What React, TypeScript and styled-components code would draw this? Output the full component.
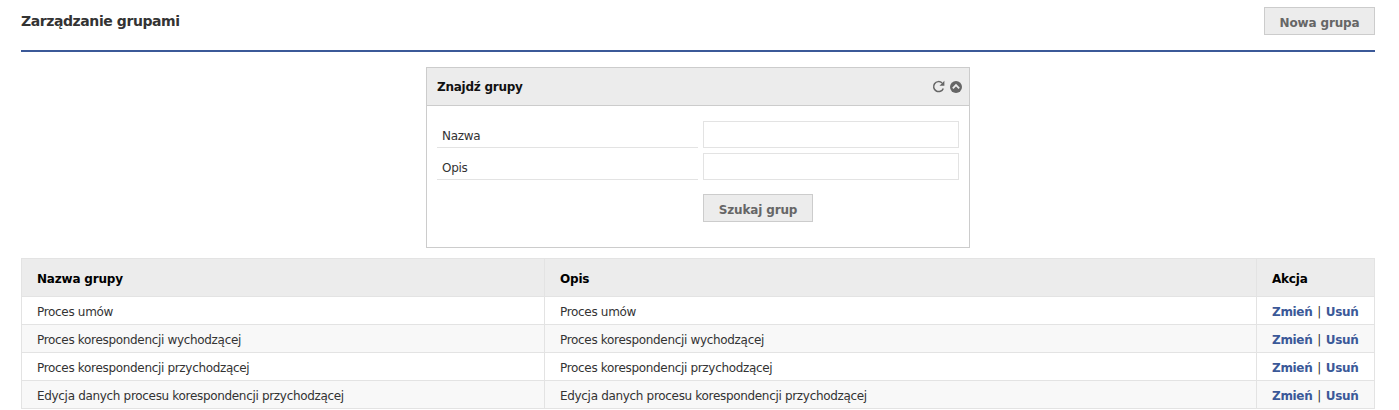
import React from "react";
import styled, { createGlobalStyle } from "styled-components";

const GlobalStyle = createGlobalStyle`
    html, body {
        margin: 0;
        padding: 0;
        background: #ffffff;
        overflow: hidden;
    }
    body {
        font-family: "DejaVu Sans", Verdana, sans-serif;
        font-size: 12px;
        letter-spacing: -0.32px;
        color: #333333;
    }
`;

const Page = styled.div`
    padding: 7px 24px 0 21px;
`;

const TopBar = styled.div`
    display: flex;
    justify-content: space-between;
    align-items: flex-start;
    height: 43px;
    border-bottom: 2px solid #3b5998;
`;

const PageTitle = styled.h1`
    margin: 6px 0 0;
    font-size: 14px;
    line-height: 17px;
    font-weight: bold;
    color: #333333;
    letter-spacing: -0.42px;
`;

const Button = styled.button`
    height: 28px;
    padding: 3px 0 0;
    width: ${(p) => p.$width}px;
    background: #ececec;
    border: 1px solid #cccccc;
    color: #666666;
    font-family: inherit;
    font-size: 12px;
    font-weight: bold;
    letter-spacing: -0.15px;
`;

const Panel = styled.section`
    width: 542px;
    height: 179px;
    margin: 15px auto 0;
    border: 1px solid #cccccc;
`;

const PanelHead = styled.header`
    display: flex;
    justify-content: space-between;
    align-items: center;
    height: 37px;
    padding: 0 7px 0 10px;
    background: #ececec;
    border-bottom: 1px solid #cccccc;
`;

const PanelTitle = styled.h2`
    margin: 1px 0 0;
    font-size: 12px;
    font-weight: bold;
    color: #111111;
    letter-spacing: -0.25px;
`;

const PanelIcons = styled.div`
    display: flex;
    align-items: center;
    gap: 5px;
`;

const PanelBody = styled.div`
    padding: 15px 10px 0;
`;

const FieldRow = styled.div`
    display: flex;
    gap: 5px;
    margin-bottom: 5px;
`;

const FieldLabel = styled.label`
    display: flex;
    align-items: center;
    box-sizing: border-box;
    width: 261px;
    height: 27px;
    padding: 4px 0 0 5px;
    border-bottom: 1px solid #e3e3e3;
`;

const FieldInput = styled.input`
    box-sizing: border-box;
    width: 256px;
    height: 27px;
    border: 1px solid #e3e3e3;
    background: #ffffff;
    outline: none;
`;

const FormActions = styled.div`
    margin: 14px 0 0 266px;
`;

const Table = styled.table`
    width: 1354px;
    margin-top: 10px;
    border-collapse: collapse;
    table-layout: fixed;
`;

const Th = styled.th`
    height: 35px;
    padding: 2px 15px 0;
    background: #ececec;
    border: 1px solid #e3e3e3;
    text-align: left;
    font-size: 12px;
    font-weight: bold;
    letter-spacing: -0.2px;
    color: #000000;
    width: ${(p) => (p.$width ? `${p.$width}px` : "auto")};
`;

const Row = styled.tr`
    background: ${(p) => (p.$alt ? "#f8f8f8" : "#ffffff")};
`;

const Td = styled.td`
    height: 25px;
    padding: 2px 15px 0;
    border: 1px solid #e3e3e3;
    white-space: nowrap;
`;

const ActionLink = styled.a`
    color: #3b5998;
    font-weight: bold;
    text-decoration: none;
`;

const Separator = styled.span`
    margin: 0 1.3px;
`;

const groups = [
    "Proces umów",
    "Proces korespondencji wychodzącej",
    "Proces korespondencji przychodzącej",
    "Edycja danych procesu korespondencji przychodzącej",
];

const App: React.FC = () => {
    return (
        <Page>
            <GlobalStyle />
            <TopBar>
                <PageTitle>Zarządzanie grupami</PageTitle>
                <Button $width={111}>Nowa grupa</Button>
            </TopBar>

            <Panel>
                <PanelHead>
                    <PanelTitle>Znajdź grupy</PanelTitle>
                    <PanelIcons>
                        <svg width="13" height="13" viewBox="0 0 13 13" fill="none">
                            <path d="M11.3 8.4A5 5 0 1 1 10 2.9" stroke="#666666" strokeWidth="1.5" />
                            <path d="M12.4 .8v4.9H7.5z" fill="#666666" />
                        </svg>
                        <svg width="12" height="12" viewBox="0 0 12 12">
                            <circle cx="6" cy="6" r="6" fill="#666666" />
                            <path d="M2.8 7.3 6 4.1l3.2 3.2" fill="none" stroke="#ececec" strokeWidth="1.8" />
                        </svg>
                    </PanelIcons>
                </PanelHead>
                <PanelBody>
                    <FieldRow>
                        <FieldLabel>Nazwa</FieldLabel>
                        <FieldInput />
                    </FieldRow>
                    <FieldRow>
                        <FieldLabel>Opis</FieldLabel>
                        <FieldInput />
                    </FieldRow>
                    <FormActions>
                        <Button $width={110}>Szukaj grup</Button>
                    </FormActions>
                </PanelBody>
            </Panel>

            <Table>
                <thead>
                    <tr>
                        <Th $width={492}>Nazwa grupy</Th>
                        <Th>Opis</Th>
                        <Th $width={87}>Akcja</Th>
                    </tr>
                </thead>
                <tbody>
                    {groups.map((name, index) => (
                        <Row key={index} $alt={index % 2 === 1}>
                            <Td>{name}</Td>
                            <Td>{name}</Td>
                            <Td>
                                <ActionLink href="#">Zmień</ActionLink> <Separator>|</Separator> <ActionLink href="#">Usuń</ActionLink>
                            </Td>
                        </Row>
                    ))}
                </tbody>
            </Table>
        </Page>
    );
};

export default App;
